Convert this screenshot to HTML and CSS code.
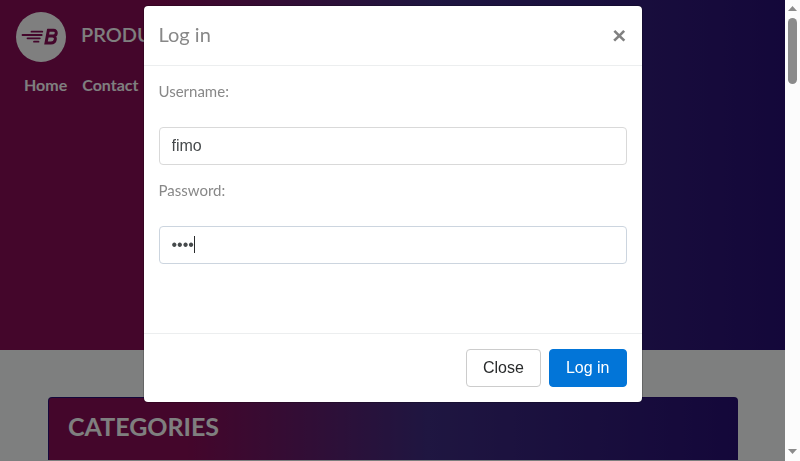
FILE: index.html
```html
<!DOCTYPE html>
<html lang="en">
<head>
  <meta charset="utf-8">
  <title>Log in</title>
  <link rel="stylesheet" href="styles.css">
</head>
<body>
  <div class="page">
    <header class="hero">
      <a class="brand" href="#">
        <svg class="logo" viewBox="0 0 50 50" aria-hidden="true">
          <circle cx="25" cy="25" r="25" fill="#fff"/>
          <g fill="none" stroke="#880c56" stroke-width="1.800" stroke-linecap="round">
            <path d="M15.500 19.700h10.800M6.500 23h19.200M11.500 26.300h12.300M18 29.700h4.500"/>
            <path d="M32 18.200h5.500c4 0 3.500 5.900-.5 5.900h-4.500M36.500 24.100c4.500 0 3.500 7-1.500 7h-5l2.600-14" stroke-width="3" stroke-linecap="butt" stroke-linejoin="miter"/>
          </g>
        </svg>
        <span>PRODU</span>
      </a>
      <nav class="links">
        <a href="#">Home</a>
        <a href="#">Contact</a>
      </nav>
    </header>
    <main class="content">
      <section class="categories">
        <h2>CATEGORIES</h2>
      </section>
    </main>
  </div>

  <div class="scrollbar" aria-hidden="true">
    <svg viewBox="0 0 9 5"><path d="M0 5L4.500 0L9 5z"/></svg>
    <div class="thumb"></div>
    <svg viewBox="0 0 9 5"><path d="M0 0L4.500 5L9 0z"/></svg>
  </div>

  <div class="backdrop">
    <form class="modal" role="dialog" aria-labelledby="modal-title">
      <div class="modal-header">
        <h5 id="modal-title">Log in</h5>
        <button class="dismiss" type="button" aria-label="Dismiss">×</button>
      </div>
      <div class="modal-body">
        <label for="username">Username:</label>
        <input id="username" type="text" value="fimo">
        <label for="password">Password:</label>
        <div class="field">
          <input id="password" class="active" type="password" value="fimo">
          <span class="caret"></span>
        </div>
      </div>
      <div class="modal-footer">
        <button class="btn" type="button">Close</button>
        <button class="btn primary" type="button">Log in</button>
      </div>
    </form>
  </div>
</body>
</html>
```

FILE: styles.css
```css
* {
  box-sizing: border-box;
}

body {
  display: grid;
  grid-template-columns: 1fr 15px;
  height: 100vh;
  margin: 0;
  overflow: hidden;
  font: 16px/24px Lato, sans-serif;
  background: #fff;
}

a {
  color: inherit;
  text-decoration: none;
}

.page {
  min-width: 0;
  overflow: hidden;
  background: #fdfeff;
}

.hero,
.categories {
  color: #fff;
  background: linear-gradient(90deg, #880c56 20%, #3e2c82 55%, #280f74);
}

.hero {
  min-height: 350px;
  padding: 12px 16px;
}

.brand {
  display: flex;
  align-items: center;
  gap: 15px;
  font-size: 20px;
  font-weight: 600;
}

.brand span {
  padding-bottom: 6px;
}

.logo {
  width: 50px;
  height: 50px;
}

.links {
  display: flex;
  gap: 15px;
  padding: 11px 8px;
  font-weight: 700;
}

.content {
  padding: 47px 47px 0 48px;
}

.categories {
  border: 1px solid #280f74;
  border-bottom: 0;
  border-radius: 4px 4px 0 0;
  padding: 13px 19px 18px;
}

.categories h2 {
  margin: 0;
  font-size: 25px;
  line-height: 31px;
  font-weight: 700;
}

.scrollbar {
  display: flex;
  flex-direction: column;
  align-items: center;
  padding: 6px 0 7px;
  background: #fcfcfc;
}

.scrollbar svg {
  width: 9px;
  height: 5px;
  fill: #8b8b8b;
}

.thumb {
  width: 9px;
  height: 66px;
  margin: 7px 0 auto;
  border-radius: 5px;
  background: #8b8b8b;
}

.backdrop {
  position: fixed;
  inset: 0 15px 0 0;
  padding-top: 5px;
  background: rgba(0, 0, 0, 0.5);
}

.modal {
  width: 100%;
  max-width: 500px;
  margin: 0 auto;
  border: 1px solid rgba(0, 0, 0, 0.2);
  border-radius: 5px;
  background: #fff;
  background-clip: padding-box;
  color: #888;
}

.modal-header {
  display: flex;
  align-items: center;
  justify-content: space-between;
  padding: 13px 15px 16px;
  border-bottom: 1px solid #eceeef;
}

.modal-header h5 {
  margin: 0;
  font-size: 20px;
  line-height: 30px;
  font-weight: 400;
}

.dismiss {
  border: 0;
  padding: 0;
  background: none;
  color: #808080;
  font: 900 25px/26px Lato, sans-serif;
}

.modal-body {
  padding: 15px 15px 69px;
}

.modal-body label {
  display: block;
  padding-bottom: 26px;
  font-size: 15px;
  line-height: 20px;
}

.modal-body input {
  display: block;
  width: 100%;
  height: 38px;
  padding: 0 12px;
  border: 1px solid #d9d9d9;
  border-radius: 4px;
  outline: 0;
  background: #fff;
  color: #464a4c;
  font: 16px/20px "Liberation Sans", Arial, sans-serif;
}

.modal-body input + label {
  margin-top: 15px;
}

.modal-body .active {
  border-color: #ccd5df;
}

.field {
  position: relative;
}

.caret {
  position: absolute;
  top: 10px;
  left: 35px;
  width: 1px;
  height: 17px;
  background: #292b2c;
}

.modal-footer {
  display: flex;
  justify-content: flex-end;
  gap: 8px;
  padding: 15px;
  border-top: 1px solid #eceeef;
}

.btn {
  height: 38px;
  padding: 0 16px;
  border: 1px solid #ccc;
  border-radius: 4px;
  background: #fff;
  color: #292b2c;
  font: 16px/20px "Liberation Sans", Arial, sans-serif;
}

.primary {
  border-color: #0275d8;
  background: #0275d8;
  color: #fff;
}
```
